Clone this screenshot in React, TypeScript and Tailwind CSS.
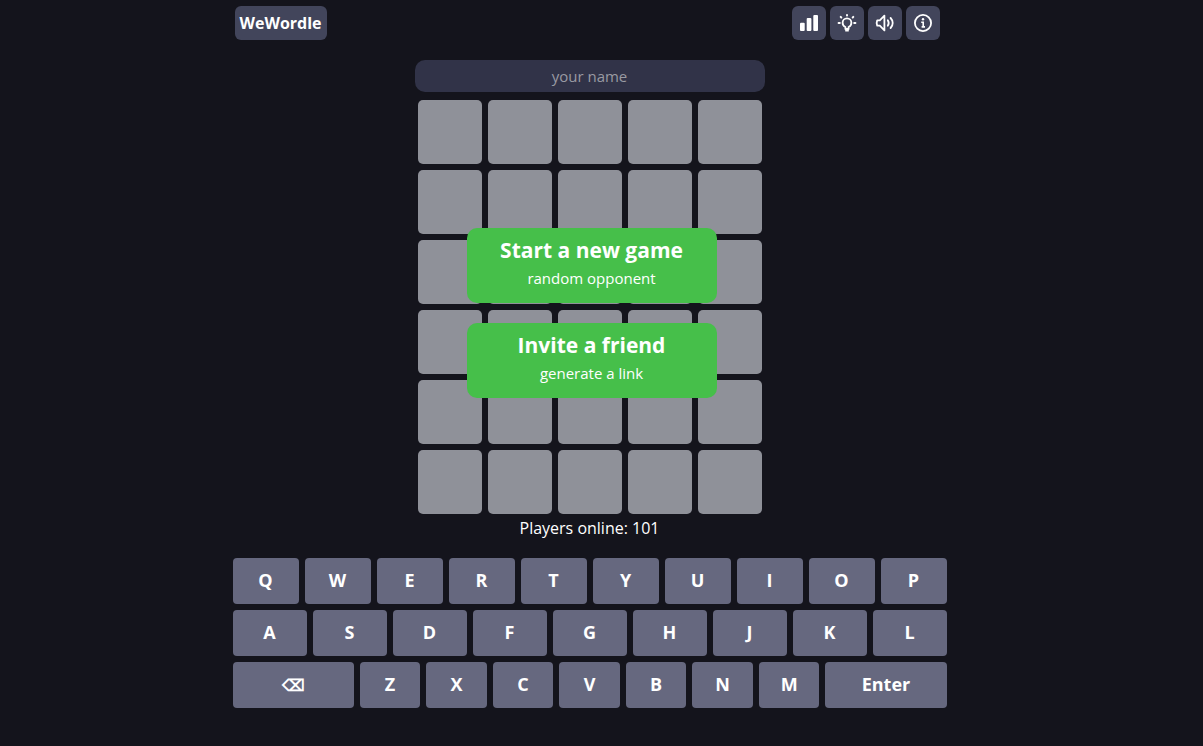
import { useState } from "react";

const KEY_ROWS = ["QWERTYUIOP", "ASDFGHJKL", "ZXCVBNM"];

const keyStyle =
  "h-[46px] rounded bg-[#66687f] pb-0.5 text-lg font-bold leading-6 text-white hover:bg-[#74768c]";
const toolStyle =
  "flex size-[34px] items-center justify-center rounded-md bg-[#42455b] text-white hover:bg-[#50536b]";

function BarsIcon() {
  return (
    <svg className="size-5" viewBox="0 0 20 20" fill="currentColor">
      <rect x="1" y="9.7" width="4.7" height="8.3" rx="1" />
      <rect x="7.700" y="5" width="4.700" height="13" rx="1" />
      <rect x="14.300" y="2" width="4.700" height="16" rx="1" />
    </svg>
  );
}

function BulbIcon() {
  return (
    <svg className="size-5" viewBox="0 0 20 20" fill="none" stroke="currentColor" strokeWidth="1.8" strokeLinecap="round">
      <path d="M8.4 16v-2C6.600 13.200 5.600 11.700 5.600 9.800a4.400 4.400 0 0 1 8.800 0c0 1.900-1 3.400-2.800 4.200v2z" strokeLinejoin="round" />
      <path d="M9 17.700h2" strokeWidth="1.800" />
      <path d="M10 1.900v.5M3.700 3.900l.6.600M16.300 3.900l-.6.600M1.600 10h1.200M17.200 10h1.200" strokeWidth="2" />
    </svg>
  );
}

function SpeakerIcon() {
  return (
    <svg className="size-5" viewBox="0 0 20 20" fill="none" stroke="currentColor" strokeWidth="1.8" strokeLinecap="round" strokeLinejoin="round">
      <path d="M2.200 7.300h2.600L9.400 2.600v14.800l-4.600-4.700H2.200c-.7-1.700-.7-3.700 0-5.400z" />
      <path d="M12.800 7.200c1.100 1.700 1.100 3.900 0 5.600M15.600 5c2.800 2.900 2.800 7.100 0 10" />
    </svg>
  );
}

function InfoIcon() {
  return (
    <svg className="size-5" viewBox="0 0 20 20" fill="none" stroke="currentColor" strokeWidth="1.8">
      <circle cx="10" cy="10" r="8.100" />
      <circle cx="10" cy="6.300" r="1.200" fill="currentColor" stroke="none" />
      <path d="M8.200 9.300h2v4.500M8.600 13.900h3.400" strokeWidth="1.600" />
    </svg>
  );
}

function Board() {
  return (
    <div className="grid grid-cols-5 gap-1.5" aria-label="Board">
      {Array.from({ length: 30 }, (_, i) => (
        <div key={i} className="aspect-square rounded-[5px] bg-[#8f9199]" />
      ))}
    </div>
  );
}

function MenuButton({ title, subtitle }: { title: string; subtitle: string }) {
  return (
    <button className="flex h-[75px] w-full flex-col items-center rounded-[10px] bg-[#46bf4a] pt-2 text-white hover:bg-[#3fb143]">
      <span className="text-[21px] font-bold leading-7">{title}</span>
      <span className="text-[15px] leading-7">{subtitle}</span>
    </button>
  );
}

export default function App() {
  const [name, setName] = useState("");
  return (
    <div className="min-h-screen bg-[#14141c] pr-6 font-['Open_Sans',sans-serif] text-white">
      <div className="mx-auto max-w-[720px]">
        <header className="flex items-center justify-between pt-1.5 pr-2.5 pl-[5px]">
          <button className="h-[34px] rounded-md bg-[#42455b] px-[5px] text-base font-bold">WeWordle</button>
          <nav className="flex gap-1">
            <button className={toolStyle} aria-label="Statistics"><BarsIcon /></button>
            <button className={toolStyle} aria-label="Hint"><BulbIcon /></button>
            <button className={toolStyle} aria-label="Sound"><SpeakerIcon /></button>
            <button className={toolStyle} aria-label="About"><InfoIcon /></button>
          </nav>
        </header>

        <main>
          <div className="mx-auto max-w-[350px] pt-5">
            <input
              className="block h-8 w-full rounded-[10px] bg-[#313348] text-center text-[15px] outline-none placeholder:text-[#999aa2]"
              placeholder="your name"
              aria-label="Your name"
              value={name}
              onChange={(e) => setName(e.target.value)}
            />
            <div className="relative mt-2 px-[3px]">
              <Board />
              <div className="absolute inset-x-0 top-32 flex justify-center pl-1">
                <div className="flex w-[250px] flex-col gap-5">
                  <MenuButton title="Start a new game" subtitle="random opponent" />
                  <MenuButton title="Invite a friend" subtitle="generate a link" />
                </div>
              </div>
            </div>
            <p className="pt-0.5 text-center text-base leading-6">Players online: 101</p>
          </div>

          <div className="flex flex-col gap-1.5 px-[3px] pt-[18px]">
            {KEY_ROWS.map((row, i) => (
              <div key={row} className="flex gap-1.5">
                {i === 2 && (
                  <button className={`${keyStyle} flex-[2]`} aria-label="Backspace">
                    <span className="text-base">⌫</span>
                  </button>
                )}
                {row.split("").map((letter) => (
                  <button key={letter} className={`${keyStyle} flex-1`}>{letter}</button>
                ))}
                {i === 2 && <button className={`${keyStyle} flex-[2]`}>Enter</button>}
              </div>
            ))}
          </div>
        </main>
      </div>
    </div>
  );
}
